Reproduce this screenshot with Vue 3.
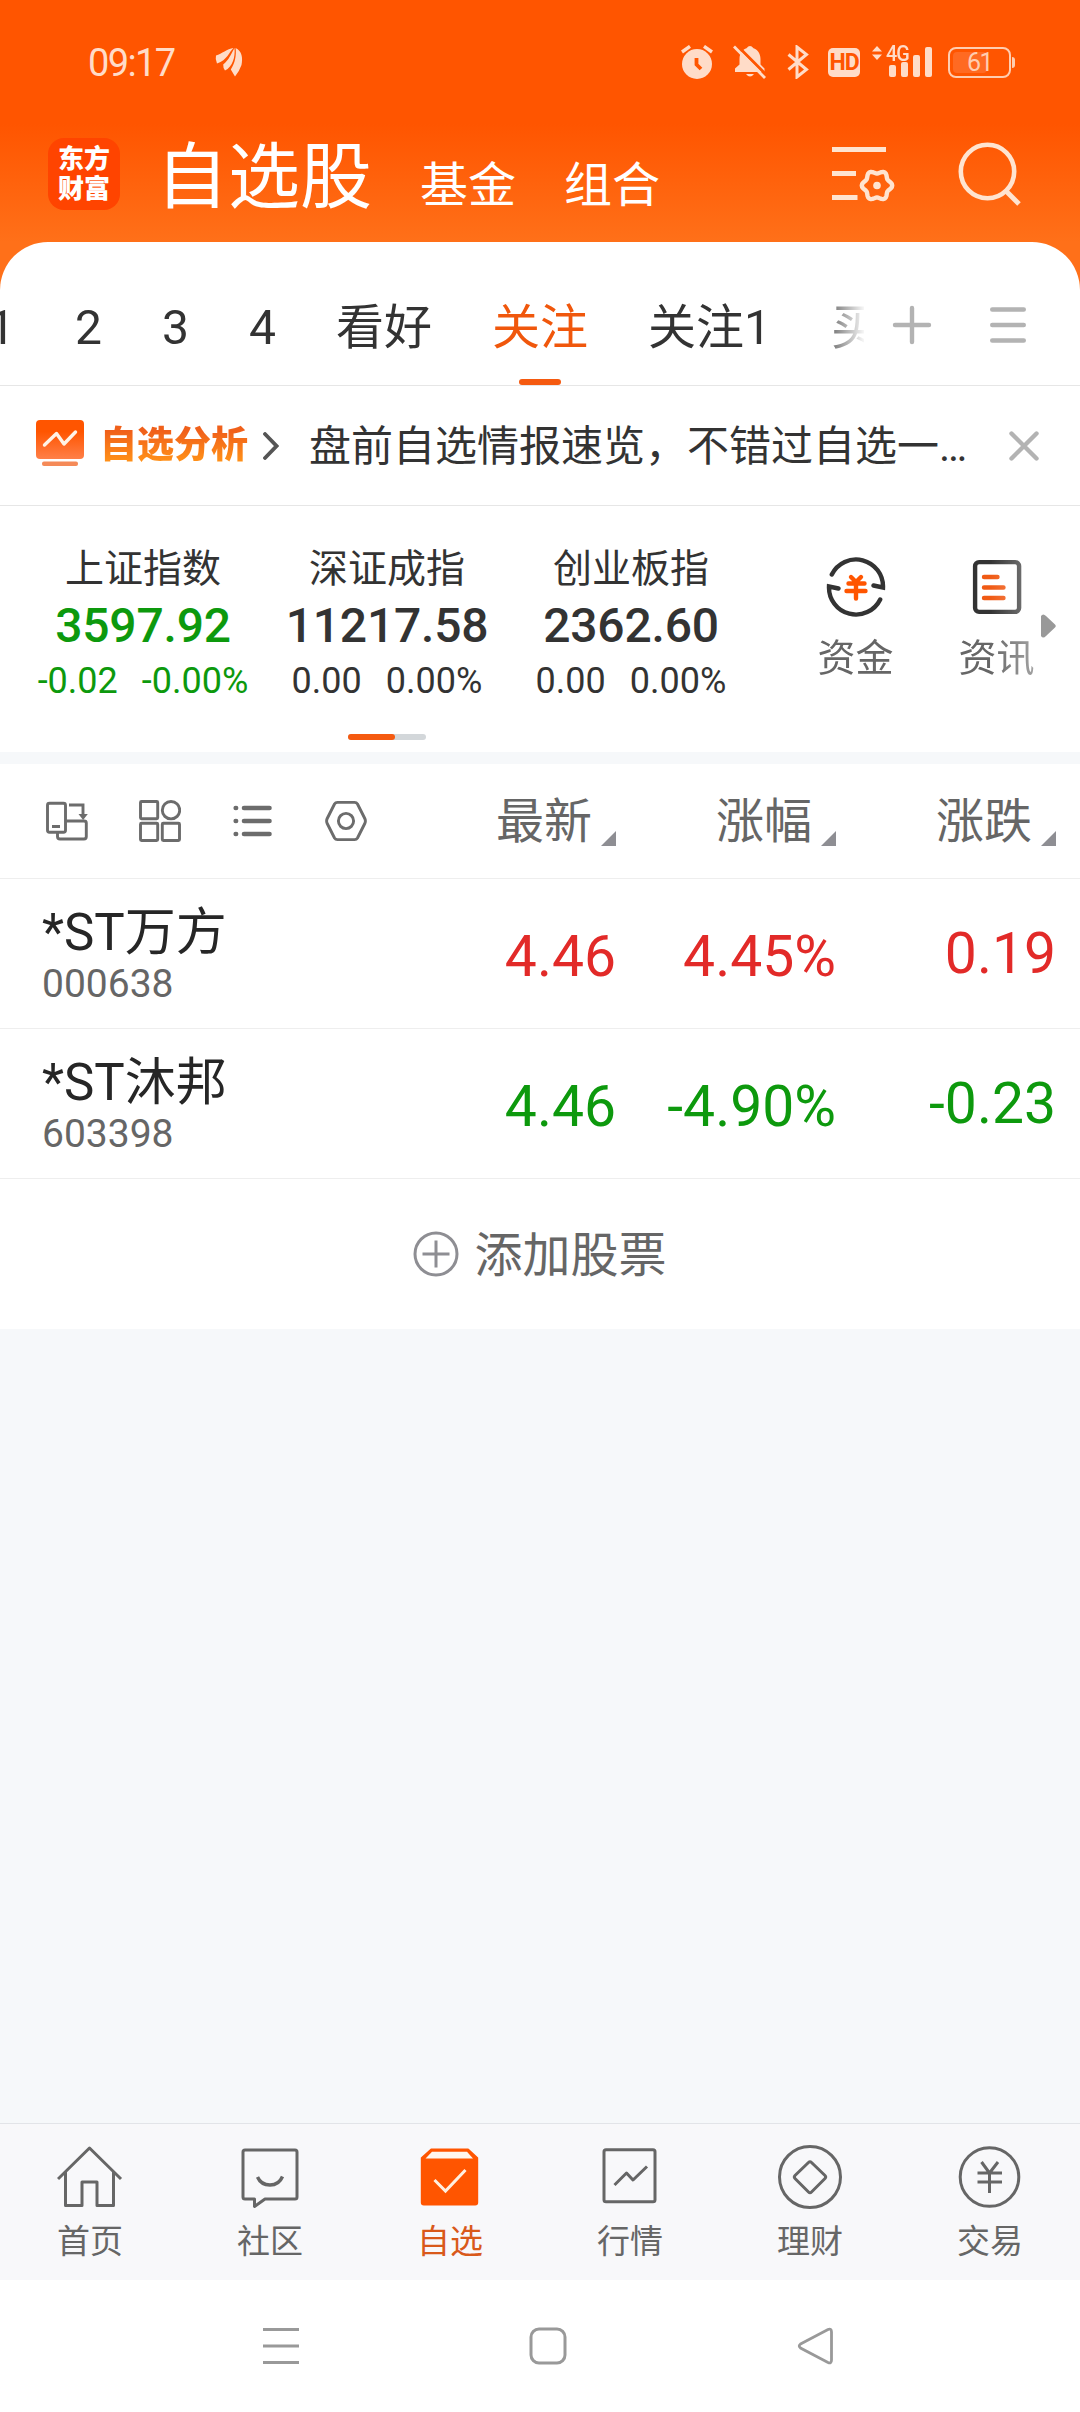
<template>
  <div class="page">
    <header class="status-bar">
      <span class="time">09:17</span>
      <svg class="leaf" width="28" height="30" viewBox="0 0 28 30" fill="#ffdcc8">
        <path d="M1 8.500 C7 6.500 12 2 18.500 1 C14 5 12.500 13 2 16.500 Q0 12 1 8.500Z" />
        <path d="M19.500 1 C20.500 10 17.500 20 10 23.500 Q8 21 8.200 17.500 C14 13 16 7 19.500 1Z" />
        <path d="M20.600 1 C27 4 28 11 26.500 18 Q24 25 20 29.500 L15.800 22.500 C20 16 21.500 9 20.600 1Z" />
      </svg>
      <div class="status-icons">
        <svg width="32" height="34" viewBox="0 0 32 34">
          <circle cx="16" cy="19" r="15" fill="#ffdcc8" />
          <path d="M1 7 L9 1.300 M31 7 L23 1.300" stroke="#ffdcc8" stroke-width="3.400" />
          <path d="M15.500 13 V19.500 L20 24" fill="none" stroke="#ff5500" stroke-width="3.800" />
        </svg>
        <svg class="bell" width="34" height="34" viewBox="0 0 34 34">
          <path d="M2 27 V23.500 L6.500 19.500 V14 C6.500 8 10 4.500 13.500 3.300 Q17 -1.500 20.500 3.300 C24 4.500 27.500 8 27.500 14 V19.500 L31.500 23.500 V27Z M13 29 H21 Q17 34 13 29Z" fill="#ffdcc8" />
          <path d="M3 -.5 L35 31.500" stroke="#ff5500" stroke-width="3" />
          <path d="M1 1.500 L32 33" stroke="#ffdcc8" stroke-width="2.800" />
        </svg>
        <svg class="bt" width="22" height="34" viewBox="0 0 22 34" fill="none" stroke="#ffdcc8" stroke-width="3">
          <path d="M1.500 9.500 L19.500 24.500 L10 32 V2 L19.500 9.500 L1.500 24.500" />
        </svg>
        <span class="hd">HD</span>
        <div class="signal">
          <svg class="updown" width="10" height="14" viewBox="0 0 10 14" fill="#ffdcc8">
            <path d="M5 0 L10 5.500 H0Z M5 14 L10 8.500 H0Z" />
          </svg>
          <span class="net">4G</span>
          <i v-for="h in signalBars" :key="h" class="signal-bar" :style="{ height: h + 'px' }"></i>
        </div>
        <div class="battery"><span>61</span></div>
      </div>
    </header>

    <div class="title-bar">
      <div class="logo"><span>东方</span><span>财富</span></div>
      <nav class="titles">
        <span class="title-main">自选股</span>
        <span>基金</span>
        <span>组合</span>
      </nav>
      <svg class="manage" width="64" height="58" viewBox="0 0 64 58" fill="none" stroke="#ffe4d0" stroke-width="4.800">
        <path d="M0 4.500 H54 M0 28.500 H24 M0 52.500 H25.500" />
        <path :d="gearPath" stroke-width="4.400" stroke-linejoin="round" />
        <circle cx="45" cy="40.500" r="3.800" fill="#ffe4d0" stroke="none" />
      </svg>
      <svg class="search" width="64" height="64" viewBox="0 0 64 64" fill="none" stroke="#ffe4d0" stroke-width="4.600">
        <circle cx="29.500" cy="29.500" r="26.700" />
        <path d="M48 49 L61 62" stroke-width="5" />
      </svg>
    </div>

    <main class="sheet">
      <div class="group-row">
        <div class="groups">
          <span
            v-for="g in groups"
            :key="g"
            :class="['group', { active: g === activeGroup }]"
            @click="activeGroup = g"
          >{{ g }}</span>
        </div>
        <svg class="plus" width="40" height="40" viewBox="0 0 40 40" stroke="#b3b3b3" stroke-width="4.400" stroke-linecap="round">
          <path d="M3 20 H37 M20 3 V37" />
        </svg>
        <svg class="list" width="36" height="36" viewBox="0 0 36 36" stroke="#b3b3b3" stroke-width="4.400" stroke-linecap="round">
          <path d="M2.200 2.500 H33.800 M2.200 18 H33.800 M2.200 33.500 H33.800" />
        </svg>
      </div>

      <div v-if="showNotice" class="notice">
        <svg class="notice-icon" width="48" height="46" viewBox="0 0 48 46">
          <defs>
            <linearGradient id="noticeFill" x1="0" y1="0" x2="0" y2="1">
              <stop offset="0.300" stop-color="#ff5500" />
              <stop offset="1" stop-color="#ff7f48" />
            </linearGradient>
          </defs>
          <rect width="48" height="39" rx="4" fill="url(#noticeFill)" />
          <rect x="6" y="41.500" width="36" height="4.500" rx="2" fill="#f58a58" />
          <path d="M8.500 25 L20.500 13.500 L28 24 L39.500 12" fill="none" stroke="#fff3e6" stroke-width="3.400" stroke-linecap="round" stroke-linejoin="round" />
        </svg>
        <span class="notice-tag">自选分析</span>
        <svg class="chevron" width="16" height="28" viewBox="0 0 16 28" fill="none" stroke="#555" stroke-width="3.800" stroke-linecap="round">
          <path d="M2 2 L13.500 14 L2 26" />
        </svg>
        <span class="notice-text">盘前自选情报速览，不错过自选一…</span>
        <svg class="close" width="30" height="30" viewBox="0 0 30 30" stroke="#b3b3b3" stroke-width="4.400" stroke-linecap="round" @click="showNotice = false">
          <path d="M2.500 2.500 L27.500 27.500 M27.500 2.500 L2.500 27.500" />
        </svg>
      </div>

      <section class="indices">
        <div class="index-list">
          <div v-for="i in indices" :key="i.name" :class="['index', { down: i.down }]">
            <div class="index-name">{{ i.name }}</div>
            <div class="index-value">{{ i.value }}</div>
            <div class="index-change"><span>{{ i.diff }}</span><span>{{ i.rate }}</span></div>
          </div>
        </div>
        <div class="shortcuts">
          <div class="shortcut">
            <svg width="60" height="60" viewBox="0 0 60 60" fill="none" stroke="#333" stroke-width="4.400" stroke-linecap="round">
              <path d="M5.800 17.500 A27 27 0 0 1 57 30.500 L47.500 28.500" />
              <path d="M54.200 42.500 A27 27 0 0 1 3 29.500 L12.500 31.500" />
              <path d="M25 20 L30 25 L35 20 M22.500 26.500 H38.500 M20.500 34 H39.500 M30 26 V41.500" stroke="#ff5500" />
            </svg>
            <span>资金</span>
          </div>
          <div class="shortcut">
            <svg width="60" height="60" viewBox="0 0 60 60" fill="none" stroke="#333" stroke-width="4.400" stroke-linecap="round">
              <rect x="8.100" y="5.100" width="44" height="49.800" rx="4" />
              <path d="M17 20 H30.500 M17 30.500 H36.500 M17 41 H36.500" stroke="#f05a14" />
            </svg>
            <span>资讯</span>
          </div>
        </div>
        <svg class="more" width="15" height="24" viewBox="0 0 15 24">
          <path d="M0 2 Q2 -1 5 2 L14 10.500 Q15.500 12 14 13.500 L5 22 Q2 25 0 22Z" fill="#999" />
        </svg>
        <div class="pager"><i></i></div>
      </section>

      <section class="stocks">
        <div class="toolbar">
          <div class="tools">
            <svg width="42" height="42" viewBox="0 0 42 42" fill="none" stroke="#6c6c6c" stroke-width="2.900">
              <rect x="1.500" y="3.200" width="18" height="29" rx="2" />
              <path d="M6 26.500 H14 M23 5 H37 V16 M19 21 H38 Q40.300 21 40.300 23 V36.500 Q40.300 39 38 39 H14 Q11.500 39 11.500 36.500 V32" />
              <path d="M32.500 14 H41.800 L37.100 20Z" fill="#6c6c6c" stroke="none" />
            </svg>
            <svg width="42" height="42" viewBox="0 0 42 42" fill="none" stroke="#6c6c6c" stroke-width="2.900">
              <rect x="1.500" y="1.500" width="17.200" height="17.200" rx="1" />
              <circle cx="32" cy="10.200" r="8.700" />
              <rect x="1.500" y="23.300" width="17.200" height="17.200" rx="1" />
              <rect x="23.300" y="23.300" width="17.200" height="17.200" rx="1" />
            </svg>
            <svg width="42" height="42" viewBox="0 0 42 42" stroke="#6c6c6c" stroke-width="4.600" stroke-linecap="round">
              <path d="M12 8 H37.500 M12 21 H37.500 M12 34 H37.500 M3.700 8 H4.100 M3.700 21 H4.100 M3.700 34 H4.100" />
            </svg>
            <svg width="42" height="42" viewBox="0 0 42 42" fill="none" stroke="#6c6c6c" stroke-width="2.900">
              <path d="M12.500 2.400 H29.500 Q31.500 2.400 32.500 4 L39.800 18.500 Q41 21 39.800 23.500 L32.500 38 Q31.500 39.600 29.500 39.600 H12.500 Q10.500 39.600 9.500 38 L2.200 23.500 Q1 21 2.200 18.500 L9.500 4 Q10.500 2.400 12.500 2.400Z" />
              <circle cx="21" cy="21" r="7.600" />
            </svg>
          </div>
          <div v-for="c in columns" :key="c" class="column">
            {{ c }}<i class="sort"></i>
          </div>
        </div>

        <div v-for="s in stocks" :key="s.code" :class="['stock', s.trend]">
          <div class="stock-id">
            <div class="stock-name">{{ s.name }}</div>
            <div class="stock-code">{{ s.code }}</div>
          </div>
          <div class="num">{{ s.price }}</div>
          <div class="num">{{ s.rate }}</div>
          <div class="num diff">{{ s.diff }}</div>
        </div>

        <div class="add">
          <svg width="46" height="46" viewBox="0 0 46 46" fill="none" stroke="#8e8e93" stroke-width="3">
            <circle cx="23" cy="23" r="21" />
            <path d="M9.500 23 H36.500 M23 9.500 V36.500" />
          </svg>
          <span>添加股票</span>
        </div>
      </section>
    </main>

    <nav class="tab-bar">
      <div v-for="t in tabs" :key="t.label" :class="['tab', { current: t.label === '自选' }]">
        <svg width="66" height="66" viewBox="0 0 66 66" fill="none" stroke="#666" stroke-width="3" stroke-linejoin="round">
          <template v-if="t.icon === 'home'">
            <path d="M1 35 L32.500 4 L64 35" />
            <path d="M8.500 28 V61.500 H25 V38 H40 V61.500 H56.500 V28" />
          </template>
          <template v-else-if="t.icon === 'chat'">
            <path d="M8 6 H58 Q60 6 60 8 V53 Q60 55 58 55 H28 L17.500 62.500 V55 H8 Q6 55 6 53 V8 Q6 6 8 6Z" />
            <path d="M20.500 33 Q24 41 33 41 Q42 41 45.500 32.500" stroke-width="3.400" />
          </template>
          <template v-else-if="t.icon === 'box'">
            <path d="M4.800 14 L14.300 5.500 H51 L60.200 14 V58.500 Q60.200 60.500 58.200 60.500 H6.800 Q4.800 60.500 4.800 58.500Z" fill="#ff5500" stroke="#ff5500" stroke-width="2" />
            <path d="M8.500 14.500 L15 7.800 H50 L56 14.500Z" fill="#fff6ee" stroke="none" />
            <path d="M17.500 36 L28.500 47 L48.500 26" stroke="#fff0e0" stroke-linejoin="miter" />
          </template>
          <template v-else-if="t.icon === 'chart'">
            <rect x="7" y="5.700" width="51" height="52" rx="2" />
            <path d="M17.500 41 L29.500 29 L36 36 L50 22.500" />
          </template>
          <template v-else-if="t.icon === 'coin'">
            <circle cx="33" cy="33" r="30.500" />
            <path d="M31.500 18.500 Q33 17 34.500 18.500 L48 31.500 Q49.500 33 48 34.500 L34.500 48 Q33 49.500 31.500 48 L18 34.500 Q16.500 33 18 31.500Z" />
          </template>
          <template v-else>
            <circle cx="32.500" cy="33" r="29.300" />
            <path d="M24.500 18 L32.500 29 L41 18 M20.500 29 H45 M20.500 38 H45 M32.500 28 V49" />
          </template>
        </svg>
        <span>{{ t.label }}</span>
      </div>
    </nav>

    <footer class="system-nav">
      <svg width="36" height="38" viewBox="0 0 36 38" stroke="#999" stroke-width="3">
        <path d="M0 2.500 H36 M0 19 H36 M0 35.500 H36" />
      </svg>
      <svg width="38" height="38" viewBox="0 0 38 38" fill="none" stroke="#999" stroke-width="3">
        <rect x="2" y="2" width="34" height="34" rx="8" />
      </svg>
      <svg width="38" height="38" viewBox="0 0 38 38" fill="none" stroke="#999" stroke-width="2.800">
        <path d="M3.500 17 L31 2.500 Q34.500 1 34.500 5 V33 Q34.500 37 31 35.500 L3.500 21 Q1 19 3.500 17Z" />
      </svg>
    </footer>
  </div>
</template>

<script setup>
import { ref } from 'vue'

const signalBars = [12, 15, 22, 30]

const groups = ['1', '2', '3', '4', '看好', '关注', '关注1', '买']
const activeGroup = ref('关注')
const showNotice = ref(true)

const indices = [
  { name: '上证指数', value: '3597.92', diff: '-0.02', rate: '-0.00%', down: true },
  { name: '深证成指', value: '11217.58', diff: '0.00', rate: '0.00%' },
  { name: '创业板指', value: '2362.60', diff: '0.00', rate: '0.00%' }
]

const columns = ['最新', '涨幅', '涨跌']

const stocks = [
  { name: '*ST万方', code: '000638', price: '4.46', rate: '4.45%', diff: '0.19', trend: 'up' },
  { name: '*ST沐邦', code: '603398', price: '4.46', rate: '-4.90%', diff: '-0.23', trend: 'down' }
]

const tabs = [
  { label: '首页', icon: 'home' },
  { label: '社区', icon: 'chat' },
  { label: '自选', icon: 'box' },
  { label: '行情', icon: 'chart' },
  { label: '理财', icon: 'coin' },
  { label: '交易', icon: 'yen' }
]

// wavy six-lobed outline of the gear
function gear(cx, cy, r, wave) {
  const pts = []
  for (let a = 0; a < 360; a += 6) {
    const t = (a * Math.PI) / 180
    const rr = r + wave * Math.cos(6 * t)
    pts.push(`${(cx + rr * Math.cos(t)).toFixed(1)} ${(cy + rr * Math.sin(t)).toFixed(1)}`)
  }
  return `M${pts.join(' L')}Z`
}
const gearPath = gear(45, 40.5, 13.6, 1.6)
</script>

<style>
body { background: #f6f8fa; }
</style>

<style scoped>
.page {
  width: 1080px; height: 2412px; overflow: hidden;
  display: flex; flex-direction: column;
  font-family: Roboto, "Noto Sans CJK SC", sans-serif; color: #333;
  background: linear-gradient(#ff5500 124px, #ff7019 242px) 0 0 / 100% 300px no-repeat #f6f8fa;
}
svg { display: block; flex: none; }

.status-bar { height: 124px; flex: none; display: flex; align-items: center; padding: 0 65px 0 88px; color: #ffdcc8; }
.time { width: 127px; padding-top: 2px; font-size: 38px; letter-spacing: -1.6px; }
.leaf { margin-left: 0; }
.status-icons { margin-left: auto; display: flex; align-items: center; }
.bell { margin-left: 20px; }
.bt { margin-left: 20px; }
.hd { margin-left: 19px; width: 32px; height: 29px; line-height: 30px; border-radius: 5px; background: #ffdcc8; color: #ff5500; font-size: 23px; font-weight: 700; letter-spacing: -1px; text-align: center; }
.signal { position: relative; margin-left: 11px; width: 61px; height: 30px; display: flex; align-items: flex-end; gap: 5px; padding-left: 18px; box-sizing: border-box; }
.updown { position: absolute; left: 1px; top: -1px; }
.net { position: absolute; left: 15px; top: -3px; font-size: 22px; line-height: 20px; font-weight: 500; letter-spacing: -1px; transform: scaleX(.9); transform-origin: 0 0; }
.signal-bar { width: 7px; border-radius: 2px; background: #ffdcc8; }
.battery { position: relative; margin-left: 16px; width: 59px; height: 27px; border: 2px solid #ffcdb0; border-radius: 8px; margin-right: 4px; text-align: center; line-height: 28px; font-size: 25px; color: #ffcdb0; }
.battery::before { content: ''; position: absolute; left: 3px; top: 3px; width: 34px; height: 21px; border-radius: 4px; background: #ff6a22; }
.battery::after { content: ''; position: absolute; right: -6px; top: 8px; width: 3px; height: 11px; border-radius: 0 3px 3px 0; background: #ffcdb0; }
.battery span { position: relative; letter-spacing: -1.5px; }

.title-bar { height: 118px; flex: none; display: flex; align-items: center; padding: 0 58px 18px 48px; box-sizing: border-box; }
.logo { width: 72px; height: 72px; border-radius: 16px; background: #ff4400; display: flex; flex-direction: column; justify-content: center; align-items: center; color: #fff; font-size: 26px; line-height: 30px; font-weight: 900; }
.titles { margin-left: 36px; display: flex; align-items: baseline; gap: 48px; font-size: 48px; line-height: 72px; color: #fff; padding-top: 15px; }
.title-main { font-size: 72px; }
.manage { margin-left: auto; margin-right: 62px; }

.sheet { flex: none; background: #fff; border-radius: 48px 48px 0 0; }
.group-row { height: 144px; box-sizing: border-box; border-bottom: 1px solid #e6e6e6; display: flex; align-items: flex-start; }
.groups { width: 864px; height: 144px; overflow: hidden; display: flex; gap: 60px; white-space: nowrap; mask-image: linear-gradient(90deg, #000 815px, transparent 866px); }
.group { position: relative; height: 130px; padding-top: 14px; font-size: 48px; line-height: 144px; }
.group:first-child { margin-left: -12px; }
.active { color: #f0570c; }
.active::after { content: ''; position: absolute; left: 50%; margin-left: -21px; top: 137px; width: 42px; height: 6px; border-radius: 3px; background: #f55a10; }
.plus { margin: 63px 0 0 28px; }
.list { margin: 65px 0 0 58px; }

.notice { height: 120px; box-sizing: border-box; border-bottom: 1px solid #e6e6e6; display: flex; align-items: center; padding: 0 41px 0 36px; }
.notice-icon { margin-bottom: 5px; }
.notice-tag { margin-left: 16px; font-size: 37px; line-height: 50px; font-weight: 900; background: linear-gradient(#f0601a 20%, #ff9018 80%); background-clip: text; color: transparent; }
.chevron { margin-left: 15px; }
.notice-text { margin-left: 30px; padding-top: 2px; font-size: 42px; line-height: 60px; white-space: nowrap; }
.close { margin-left: auto; }

.indices { position: relative; height: 246px; display: flex; border-bottom: 12px solid #f6f8fa; }
.index-list { display: flex; padding-left: 21px; }
.index { width: 244px; text-align: center; padding-top: 38px; }
.index-name { font-size: 39px; line-height: 50px; }
.index-value { font-size: 48px; line-height: 58px; font-weight: 500; margin-top: 3px; letter-spacing: -.2px; }
.index-change { display: flex; justify-content: center; gap: 24px; font-size: 36px; line-height: 44px; margin-top: 4px; }
.index.down .index-value, .index.down .index-change { color: #0d990d; }
.shortcuts { margin-left: 32px; width: 256px; display: flex; mask-image: linear-gradient(90deg, #000 205px, rgba(0, 0, 0, .55) 256px); }
.shortcut { width: 141px; flex: none; padding-top: 51px; display: flex; flex-direction: column; align-items: center; font-size: 38px; line-height: 50px; color: #666; }
.shortcut span { margin-top: 16px; }
.more { position: absolute; left: 1041px; top: 108px; }
.pager { position: absolute; left: 348px; top: 228px; width: 78px; height: 6px; border-radius: 3px; background: #d3d7da; }
.pager i { display: block; width: 47px; height: 6px; border-radius: 3px; background: #f55a10; }

.toolbar { height: 115px; box-sizing: border-box; border-bottom: 1px solid #eee; display: flex; align-items: center; padding: 0 24px 0 46px; color: #666; }
.tools { width: 350px; display: flex; gap: 51px; }
.column { width: 220px; display: flex; justify-content: flex-end; align-items: flex-end; padding-top: 2px; font-size: 48px; line-height: 60px; }
.sort { margin: 0 0 6px 9px; border-left: 15px solid transparent; border-bottom: 15px solid #8e8e93; }

.stock { height: 150px; box-sizing: border-box; border-bottom: 1px solid #eee; display: flex; align-items: center; padding: 0 24px 0 42px; }
.stock-id { width: 354px; }
.stock-name { font-size: 51px; line-height: 60px; color: #262626; }
.stock-code { font-size: 39px; line-height: 42px; color: #666; }
.num { width: 220px; text-align: right; font-size: 57px; line-height: 66px; padding-top: 7px; box-sizing: border-box; }
.diff { padding-top: 1px; }
.up .num { color: #e22a28; }
.down .num { color: #0d990d; }

.add { height: 150px; display: flex; align-items: center; justify-content: center; gap: 15px; font-size: 48px; line-height: 60px; color: #666; }
.add span { padding-top: 4px; }

.tab-bar { height: 157px; box-sizing: border-box; margin-top: auto; flex: none; border-top: 1px solid #e2e4e8; background: #f8f8fa; display: flex; }
.tab { width: 180px; padding-top: 20px; display: flex; flex-direction: column; align-items: center; font-size: 33px; line-height: 44px; color: #666; }
.tab span { margin-top: 10px; }
.current { color: #d9591a; }

.system-nav { height: 132px; flex: none; background: #fff; display: flex; align-items: center; padding-left: 263px; gap: 230px; box-sizing: border-box; }
</style>
